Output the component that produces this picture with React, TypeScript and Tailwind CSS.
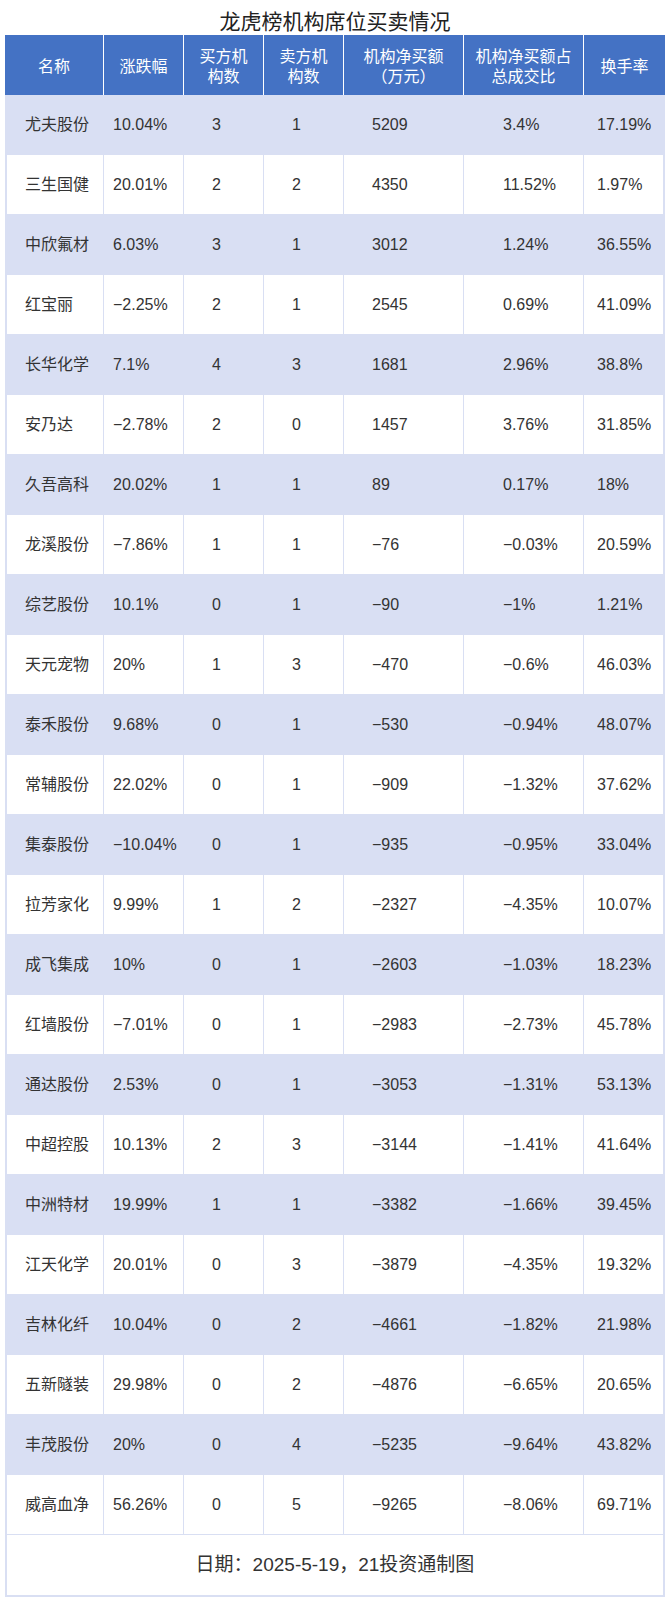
const rows: string[][] = [
  ["尤夫股份", "10.04%", "3", "1", "5209", "3.4%", "17.19%"],
  ["三生国健", "20.01%", "2", "2", "4350", "11.52%", "1.97%"],
  ["中欣氟材", "6.03%", "3", "1", "3012", "1.24%", "36.55%"],
  ["红宝丽", "−2.25%", "2", "1", "2545", "0.69%", "41.09%"],
  ["长华化学", "7.1%", "4", "3", "1681", "2.96%", "38.8%"],
  ["安乃达", "−2.78%", "2", "0", "1457", "3.76%", "31.85%"],
  ["久吾高科", "20.02%", "1", "1", "89", "0.17%", "18%"],
  ["龙溪股份", "−7.86%", "1", "1", "−76", "−0.03%", "20.59%"],
  ["综艺股份", "10.1%", "0", "1", "−90", "−1%", "1.21%"],
  ["天元宠物", "20%", "1", "3", "−470", "−0.6%", "46.03%"],
  ["泰禾股份", "9.68%", "0", "1", "−530", "−0.94%", "48.07%"],
  ["常辅股份", "22.02%", "0", "1", "−909", "−1.32%", "37.62%"],
  ["集泰股份", "−10.04%", "0", "1", "−935", "−0.95%", "33.04%"],
  ["拉芳家化", "9.99%", "1", "2", "−2327", "−4.35%", "10.07%"],
  ["成飞集成", "10%", "0", "1", "−2603", "−1.03%", "18.23%"],
  ["红墙股份", "−7.01%", "0", "1", "−2983", "−2.73%", "45.78%"],
  ["通达股份", "2.53%", "0", "1", "−3053", "−1.31%", "53.13%"],
  ["中超控股", "10.13%", "2", "3", "−3144", "−1.41%", "41.64%"],
  ["中洲特材", "19.99%", "1", "1", "−3382", "−1.66%", "39.45%"],
  ["江天化学", "20.01%", "0", "3", "−3879", "−4.35%", "19.32%"],
  ["吉林化纤", "10.04%", "0", "2", "−4661", "−1.82%", "21.98%"],
  ["五新隧装", "29.98%", "0", "2", "−4876", "−6.65%", "20.65%"],
  ["丰茂股份", "20%", "0", "4", "−5235", "−9.64%", "43.82%"],
  ["威高血净", "56.26%", "0", "5", "−9265", "−8.06%", "69.71%"],
];

// column widths (incl. right border) and left padding per column
const colWidth = ["w-[99px]", "w-[80px]", "w-[80px]", "w-[80px]", "w-[120px]", "w-[120px]", "flex-1"];
const colPad = ["pl-[18px]", "pl-[9px]", "pl-[28px]", "pl-[28px]", "pl-[28px]", "pl-[39px]", "pl-[13px]"];

const headers = [
  ["名称"],
  ["涨跌幅"],
  ["买方机", "构数"],
  ["卖方机", "构数"],
  ["机构净买额", "（万元）"],
  ["机构净买额占", "总成交比"],
  ["换手率"],
];

export default function App() {
  return (
    <div
      className="w-[670px] h-[1600px] bg-white text-[#333]"
      style={{ fontFamily: '"Liberation Sans", "Noto Sans CJK SC", sans-serif' }}
    >
      {/* Title */}
      <div className="h-[35px] pt-[9px] text-center text-[21px] leading-[26px] text-[#222]">
        龙虎榜机构席位买卖情况
      </div>

      <div className="ml-[5px] w-[660px]">
        {/* Header */}
        <div className="flex h-[60px] bg-[#4472c4] text-white text-[16px] leading-[20px]">
          {headers.map((lines, i) => (
            <div
              key={i}
              className={`${colWidth[i]} ${i < 6 ? "border-r border-white" : ""} flex flex-col items-center justify-center pt-[4px]`}
            >
              {lines.map((l) => (
                <span key={l}>{l}</span>
              ))}
            </div>
          ))}
        </div>

        {/* Body */}
        <div className="border-x-2 border-b-2 border-[#d9dff3]">
          {rows.map((r, ri) => (
            <div
              key={r[0]}
              className={`flex h-[60px] border-b border-[#d9dff3] text-[16px] ${ri % 2 === 0 ? "bg-[#d9dff3]" : "bg-white"}`}
            >
              {r.map((c, ci) => (
                <div
                  key={ci}
                  className={`${ci === 0 ? "w-[97px]" : colWidth[ci]} ${colPad[ci]} ${ci < 6 ? "border-r border-[#d9dff3]" : ""} flex items-center whitespace-nowrap`}
                >
                  {c}
                </div>
              ))}
            </div>
          ))}
          <div className="h-[60px] flex items-center justify-center text-[19px] text-[#333]">
            日期：2025-5-19，21投资通制图
          </div>
        </div>
      </div>
    </div>
  );
}
